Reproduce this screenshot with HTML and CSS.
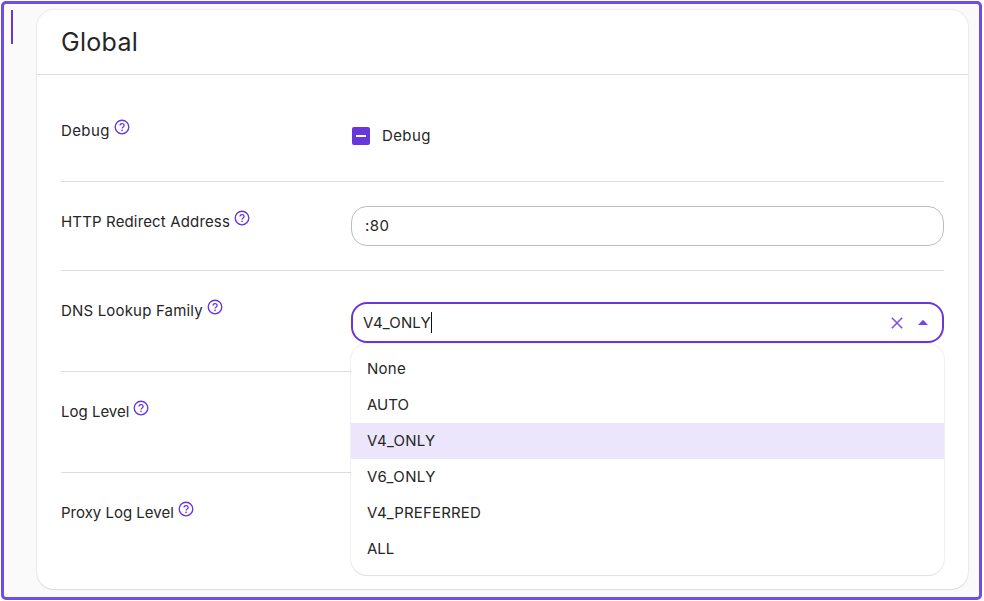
FILE: index.html
```
<!DOCTYPE html>
<html lang="en">
<head>
<meta charset="utf-8">
<title>Global</title>
<link rel="stylesheet" href="styles.css">
</head>
<body>
<svg width="0" height="0" class="defs">
  <symbol id="help" viewBox="0 0 16 16">
    <circle cx="8" cy="8" r="6.8" fill="none" stroke="currentColor" stroke-width="1.35"/>
    <path d="M6 6.45a2.05 1.85 0 1 1 3.2 1.5C8.5 8.4 8.05 8.7 8.05 9.5" fill="none" stroke="currentColor" stroke-width="1.3"/>
    <circle cx="8.05" cy="11.3" r=".85" fill="currentColor"/>
  </symbol>
</svg>
<main class="frame">
  <aside class="rail"></aside>
  <section class="card">
    <header class="card-header"><h1>Global</h1></header>
    <div class="rows">
      <div class="row">
        <div class="label"><span class="t-debug">Debug</span><svg class="help"><use href="#help"/></svg></div>
        <div class="check"><span class="box"></span><span class="t-debug">Debug</span></div>
      </div>
      <div class="row">
        <div class="label"><span class="t-http">HTTP Redirect Address</span><svg class="help"><use href="#help"/></svg></div>
        <div class="input"><span class="t-port">:80</span></div>
      </div>
      <div class="row tall">
        <div class="label"><span class="t-dns">DNS Lookup Family</span><svg class="help"><use href="#help"/></svg></div>
        <div class="select">
          <span class="t-value">V4_ONLY</span><span class="caret"></span>
          <svg class="clear" viewBox="0 0 12 12"><path d="M.8.8l10.4 10.4M11.2.8L.8 11.2" stroke="currentColor" stroke-width="1.4"/></svg>
          <svg class="arrow" viewBox="0 0 10 5"><path d="M0 5L4.3.4Q5-.2 5.7.4L10 5z" fill="currentColor"/></svg>
          <ul class="menu">
            <li><span class="t-none">None</span></li>
            <li>AUTO</li>
            <li class="active"><span class="t-v4">V4_ONLY</span></li>
            <li><span class="t-v6">V6_ONLY</span></li>
            <li><span class="t-pref">V4_PREFERRED</span></li>
            <li>ALL</li>
          </ul>
        </div>
      </div>
      <div class="row tall">
        <div class="label"><span>Log Level</span><svg class="help"><use href="#help"/></svg></div>
      </div>
      <div class="row tall">
        <div class="label"><span>Proxy Log Level</span><svg class="help"><use href="#help"/></svg></div>
      </div>
    </div>
  </section>
</main>
</body>
</html>
```
FILE: styles.css
```
* { box-sizing: border-box; }
body {
  margin: 0;
  padding: 1px;
  height: 601px;
  overflow: hidden;
  background: #fff;
  color: #262626;
  font: 400 15px/24px Inter, "Liberation Sans", sans-serif;
}
.defs { position: absolute; }
.frame {
  display: flex;
  width: 981px;
  height: 599px;
  padding: 6px 11px 0 7px;
  border: 3px solid #6c4de6;
  border-radius: 5px;
  background: #fafafa;
}
.rail {
  width: 2px;
  height: 34px;
  margin-right: 24px;
  background: #6837dc;
}
.card {
  width: 931px;
  height: 579px;
  background: #fff;
  border-radius: 17px;
  box-shadow: 0 0 1px 1px rgba(0, 0, 0, .06), 0 1px 1px rgba(0, 0, 0, .08);
}
.card-header {
  height: 65px;
  padding: 16px 24px;
  border-bottom: 1px solid #ddd;
}
h1 {
  margin: 0;
  font-size: 25px;
  font-weight: 400;
  letter-spacing: .3px;
  line-height: 32px;
}
.rows { padding: 16px 24px 0; }
.row {
  display: grid;
  grid-template-columns: 290px 593px;
  align-items: start;
  height: 89px;
  border-bottom: 1px solid #ddd;
}
.row:first-child { height: 91px; }
.row.tall { height: 101px; }
.row:last-child { border-bottom: 0; }
.label {
  display: flex;
  gap: 4px;
  padding-top: 28px;
  white-space: nowrap;
}
.help {
  width: 16px;
  height: 16px;
  color: #6837dc;
}
.check {
  display: flex;
  align-items: center;
  gap: 12px;
  padding: 33px 0 0 1px;
}
.box {
  display: flex;
  align-items: center;
  justify-content: center;
  width: 18px;
  height: 18px;
  border-radius: 2px;
  background: #6837dc;
}
.box::after {
  content: "";
  width: 10px;
  height: 2px;
  background: #fff;
}
.input {
  height: 40px;
  margin-top: 24px;
  padding: 7px 13px;
  border: 1px solid #bdbdbd;
  border-radius: 16px;
}
.select {
  position: relative;
  display: flex;
  align-items: center;
  height: 41px;
  margin-top: 31px;
  padding: 0 14px 0 10px;
  border: 2px solid #6837dc;
  border-radius: 16px;
}
.caret {
  width: 1px;
  height: 21px;
  background: #111;
}
.clear {
  width: 12px;
  height: 12px;
  margin-left: auto;
  color: #7545e8;
}
.arrow {
  width: 10px;
  height: 5px;
  margin-left: 15px;
  color: #7545e8;
}
.menu {
  position: absolute;
  z-index: 1;
  top: 40px;
  left: -2px;
  width: 593px;
  height: 231px;
  margin: 0;
  padding: 7px 0 8px;
  list-style: none;
  background: #fff;
  border-radius: 16px;
  box-shadow: 0 0 1px 1px rgba(0, 0, 0, .06), 0 1px 1px rgba(0, 0, 0, .08);
}
.menu li { height: 36px; padding: 6px 16px; }
.menu .active { background: #ebe6fb; }
.t-debug { letter-spacing: .38px; }
.t-http { letter-spacing: .15px; }
.t-port { letter-spacing: .45px; }
.t-dns { letter-spacing: .18px; }
.t-value { letter-spacing: .16px; }
.t-none { letter-spacing: .25px; }
.t-v4 { letter-spacing: .25px; }
.t-v6 { letter-spacing: .4px; }
.t-pref { letter-spacing: .15px; }
```
